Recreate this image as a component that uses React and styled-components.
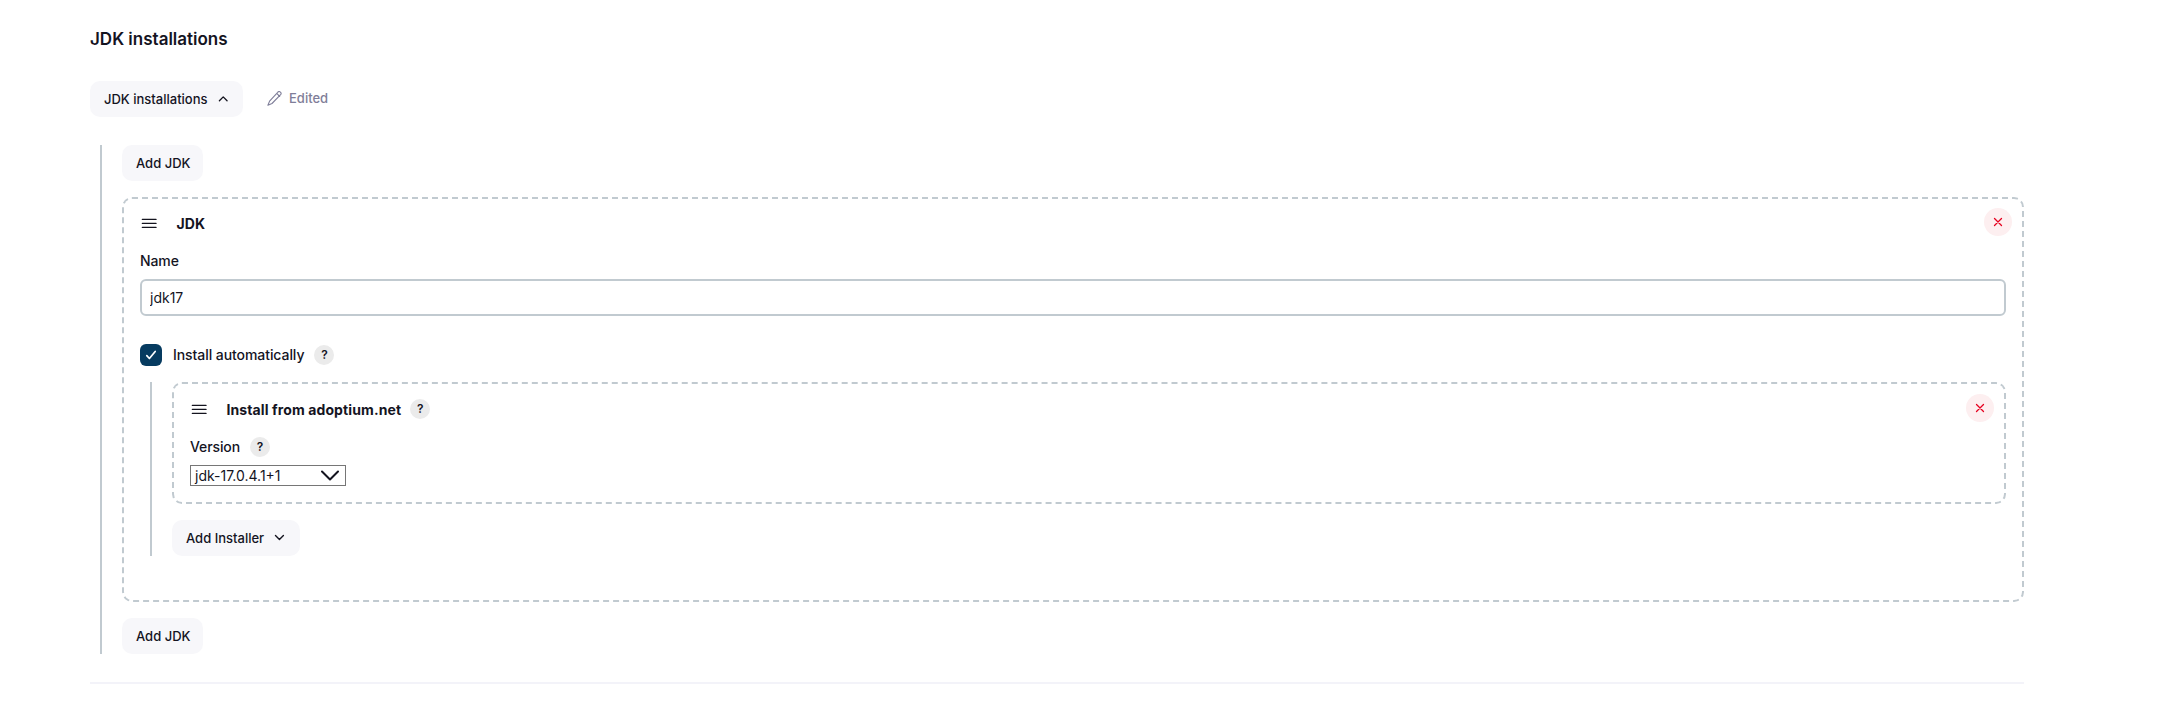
import React from "react";
import styled, { createGlobalStyle } from "styled-components";

const Global = createGlobalStyle`
  * { box-sizing: border-box; }
  body {
    margin: 0;
    background: #fff;
    color: #14141f;
    font-family: Inter, "Liberation Sans", sans-serif;
    font-size: 14px;
    line-height: 20px;
  }
`;

const Page = styled.main`
  display: flex;
  flex-direction: column;
  width: 1934px;
  margin-left: 90px;
  padding-top: 29px;
`;

const Title = styled.h2`
  margin: 0 0 32px;
  font-size: 17px;
  font-weight: 600;
  line-height: 20px;
`;

const Toolbar = styled.div`
  display: flex;
  align-items: center;
  gap: 24px;
  margin-bottom: 28px;
`;

const Button = styled.button`
  display: inline-flex;
  align-items: center;
  gap: 9px;
  width: ${(p) => p.$width}px;
  height: 36px;
  padding: 0 14px;
  border: 0;
  border-radius: 10px;
  background: #f7f7fa;
  color: inherit;
  font: 500 13px/18px Inter, "Liberation Sans", sans-serif;
  white-space: nowrap;
`;

const Edited = styled.span`
  display: inline-flex;
  align-items: center;
  gap: 7px;
  padding-bottom: 2px;
  color: #7f7e99;
  font-size: 13px;
  font-weight: 500;
`;

const Branch = styled.section`
  display: flex;
  flex-direction: column;
  align-items: flex-start;
  gap: 16px;
  margin-left: 10px;
  padding-left: 20px;
  border-left: 2px solid #c1cad0;
`;

const Card = styled.article`
  display: flex;
  flex-direction: column;
  width: 100%;
  height: ${(p) => p.$height}px;
  padding: ${(p) => p.$top}px ${(p) => p.$right}px 0 16px;
  border: 2px dashed #c1cad0;
  border-radius: 10px;
`;

const CardHeader = styled.header`
  display: flex;
  align-items: center;
  height: 28px;
  margin-right: ${(p) => p.$pull}px;
`;

const CardTitle = styled.b`
  margin: 3px 9px 0 18.5px;
  font-weight: 700;
  letter-spacing: 0.11px;
`;

const DeleteButton = styled.button`
  display: grid;
  place-items: center;
  width: 28px;
  height: 28px;
  margin-left: auto;
  padding: 0;
  border: 0;
  border-radius: 50%;
  background: #fdeff0;
  color: #e6001f;
`;

const Label = styled.div`
  display: flex;
  align-items: center;
  gap: 10px;
  height: 20px;
  margin-top: ${(p) => p.$top}px;
  font-weight: 500;
  letter-spacing: -0.1px;
`;

const Help = styled.span`
  display: grid;
  place-items: center;
  width: 20px;
  height: 20px;
  margin-top: ${(p) => p.$drop || 0}px;
  border-radius: 50%;
  background: #ebebeb;
  font-size: 12px;
  font-weight: 600;
`;

const Input = styled.input`
  width: 100%;
  height: 37px;
  margin: 8px 0 28px;
  padding: 0 8px;
  border: 2px solid #c1cad0;
  border-radius: 6px;
  outline: 0;
  background: #fff;
  color: inherit;
  font: 400 14px/20px Inter, "Liberation Sans", sans-serif;
`;

const CheckRow = styled.label`
  display: flex;
  align-items: center;
  gap: 10px;
  height: 22px;
  margin-bottom: 16px;
  font-weight: 500;
  letter-spacing: -0.07px;
`;

const Checkbox = styled.span`
  display: grid;
  place-items: center;
  width: 22px;
  height: 22px;
  margin-right: 1px;
  border-radius: 6px;
  background: #063b60;
`;

const Select = styled.div`
  display: flex;
  align-items: center;
  justify-content: space-between;
  width: 156px;
  height: 21px;
  margin-top: 8px;
  padding: 1px 6px 0 4px;
  border: 1px solid #767676;
  font-size: 14px;
`;

const Divider = styled.hr`
  width: 100%;
  height: 2px;
  margin: 28px 0 0;
  border: 0;
  background: #f3f3f9;
`;

const Chevron = ({ up }) => (
  <svg width="14" height="14" viewBox="0 0 14 14" fill="none" stroke="currentColor" strokeWidth="1.5" strokeLinecap="round" strokeLinejoin="round">
    <path d={up ? "M2.7 8.9 7 4.6l4.3 4.3" : "M2.7 4.4 7 8.7l4.3-4.3"} />
  </svg>
);

const Pencil = () => (
  <svg width="15" height="15" viewBox="0 0 15 15" fill="none" stroke="currentColor" strokeWidth="1.1" strokeLinecap="round" strokeLinejoin="round">
    <path d="M10.7 1.3a1.7 1.7 0 0 1 2.9 2.4L5 12.5.9 14.2l1.7-4.1zM9.7 2.3l3 3" />
  </svg>
);

const HandleIcon = ({ className }) => (
  <svg className={className} width="18" height="18" viewBox="0 0 18 18" stroke="currentColor" strokeWidth="1.4" strokeLinecap="round">
    <path d="M2.4 5.4h13.6M2.4 9.4h13.6M2.4 13.4h13.6" />
  </svg>
);

const Handle = styled(HandleIcon)`
  margin-top: 2px;
`;

const Remove = () => (
  <svg width="10" height="10" viewBox="0 0 10 10" stroke="currentColor" strokeWidth="1.3" strokeLinecap="round">
    <path d="m1.5 1.5 7 7m0-7-7 7" />
  </svg>
);

const Check = () => (
  <svg width="12" height="12" viewBox="0 0 12 12" fill="none" stroke="#fff" strokeWidth="1.7" strokeLinecap="round" strokeLinejoin="round">
    <path d="m1.8 6.7 2.6 2.8 5.8-7" />
  </svg>
);

const SelectArrow = () => (
  <svg width="18" height="12" viewBox="0 0 18 12" fill="none" stroke="currentColor" strokeWidth="2" strokeLinecap="round" strokeLinejoin="round">
    <path d="m1 1.5 8 8 8-8" />
  </svg>
);

export default function App() {
  return (
    <>
      <Global />
      <Page>
        <Title>JDK installations</Title>
        <Toolbar>
          <Button $width={153}>JDK installations<Chevron up /></Button>
          <Edited><Pencil />Edited</Edited>
        </Toolbar>
        <Branch>
          <Button $width={81}>Add JDK</Button>
          <Card $height={405} $top={9} $right={16}>
            <CardHeader $pull={-6}>
              <Handle />
              <CardTitle>JDK</CardTitle>
              <DeleteButton aria-label="Delete JDK"><Remove /></DeleteButton>
            </CardHeader>
            <Label $top={15}>Name</Label>
            <Input defaultValue="jdk17" />
            <CheckRow>
              <Checkbox><Check /></Checkbox>
              Install automatically
              <Help>?</Help>
            </CheckRow>
            <Branch>
              <Card $height={122} $top={10} $right={10}>
                <CardHeader $pull={0}>
                  <Handle />
                  <CardTitle>Install from adoptium.net</CardTitle>
                  <Help $drop={2}>?</Help>
                  <DeleteButton aria-label="Delete installer"><Remove /></DeleteButton>
                </CardHeader>
                <Label $top={15}>Version<Help>?</Help></Label>
                <Select>jdk-17.0.4.1+1<SelectArrow /></Select>
              </Card>
              <Button $width={128}>Add Installer<Chevron /></Button>
            </Branch>
          </Card>
          <Button $width={81}>Add JDK</Button>
        </Branch>
        <Divider />
      </Page>
    </>
  );
}
